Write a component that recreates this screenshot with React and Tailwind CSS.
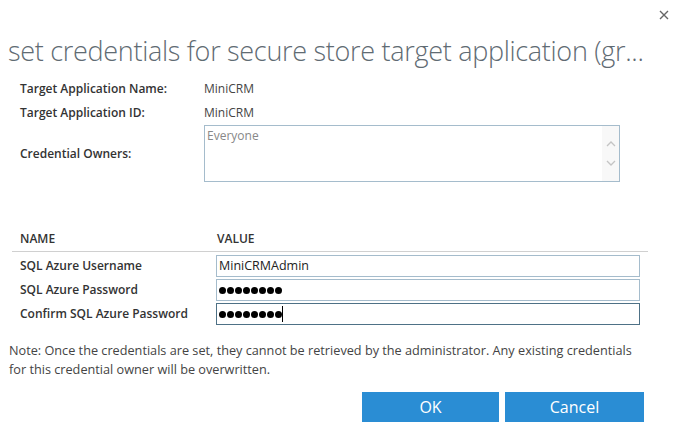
import React from 'react'

const font = { fontFamily: '"Open Sans", "Liberation Sans", sans-serif' }

const InfoRow = ({ label, children, className = '' }) => (
  <div className={`flex items-center ${className}`}>
    <div className="w-[184px] shrink-0 text-[12px] font-semibold text-[#333]">{label}</div>
    {children}
  </div>
)

const Field = ({ label, value, type = 'text', active = false }) => (
  <div className="flex items-center h-[24px]">
    <div className="w-[196px] shrink-0 text-[12px] font-semibold text-[#333]">{label}</div>
    <div
      className={`w-[424px] h-[22px] flex items-center px-[2px] border ${
        active ? 'border-[#4e7186]' : 'border-[#a5bccc]'
      }`}
    >
      {type === 'password' ? (
        <span className="flex items-center">
          {Array.from({ length: 8 }).map((_, i) => (
            <span key={i} className="w-[7px] h-[7px] rounded-full bg-black mr-[1px]" />
          ))}
          {active && <span className="w-px h-[16px] bg-black ml-[-1px]" />}
        </span>
      ) : (
        <span className="text-[12.5px] text-[#222]">{value}</span>
      )}
    </div>
  </div>
)

export default function App() {
  return (
    <div className="w-[689px] h-[439px] bg-white overflow-hidden" style={font}>
      {/* close */}
      <div className="flex justify-end pr-[20px] pt-[9px] h-[24px]">
        <svg width="10" height="10" viewBox="0 0 10 10" className="mt-[1px]">
          <path d="M1 1 L9 9 M9 1 L1 9" stroke="#666" strokeWidth="1.4" />
        </svg>
      </div>

      <h1 className="pl-[8px] mt-[10px] text-[27px] font-light leading-[34px] text-[#5f6b73] whitespace-nowrap tracking-[-0.3px]">
        set credentials for secure store target application (gr...
      </h1>

      <div className="pl-[20px] mt-[10px]">
        <InfoRow label="Target Application Name:" className="h-[22px]">
          <span className="text-[12px] text-[#444]">MiniCRM</span>
        </InfoRow>
        <InfoRow label="Target Application ID:" className="h-[23px] mt-[1px]">
          <span className="text-[12px] text-[#444]">MiniCRM</span>
        </InfoRow>
        <InfoRow label="Credential Owners:" className="mt-[1px]">
          <div className="w-[416px] h-[57px] border border-[#a5bccc] flex">
            <div className="flex-1 px-[2px] pt-[1px] text-[12px] text-[#888]">Everyone</div>
            <div className="w-[17px] bg-[#f8f8f8] flex flex-col items-center justify-center gap-[13px]">
              <svg width="10" height="6" viewBox="0 0 10 6">
                <path d="M1 5 L5 1 L9 5" stroke="#c4c4c4" strokeWidth="1.3" fill="none" />
              </svg>
              <svg width="10" height="6" viewBox="0 0 10 6">
                <path d="M1 1 L5 5 L9 1" stroke="#c4c4c4" strokeWidth="1.3" fill="none" />
              </svg>
            </div>
          </div>
        </InfoRow>
      </div>

      {/* table header */}
      <div className="mt-[45px] ml-[12px] w-[636px] border-b border-[#d0d0d0] flex items-center h-[25px] pl-[8px] text-[12px] font-semibold text-[#333]">
        <div className="w-[197px]">NAME</div>
        <div>VALUE</div>
      </div>

      <div className="pl-[20px] mt-[2px]">
        <Field label="SQL Azure Username" value="MiniCRMAdmin" />
        <Field label="SQL Azure Password" type="password" />
        <Field label="Confirm SQL Azure Password" type="password" active />
      </div>

      <p className="pl-[9px] mt-[15px] text-[12.7px] leading-[19px] text-[#444] whitespace-nowrap">
        Note: Once the credentials are set, they cannot be retrieved by the administrator. Any existing credentials
        <br />
        for this credential owner will be overwritten.
      </p>

      <div className="flex justify-end gap-[6px] pr-[45px] mt-[13px]">
        <button className="w-[137px] h-[30px] bg-[#2a8dd4] text-white text-[16px]">OK</button>
        <button className="w-[139px] h-[30px] bg-[#2a8dd4] text-white text-[16px]">Cancel</button>
      </div>
    </div>
  )
}
